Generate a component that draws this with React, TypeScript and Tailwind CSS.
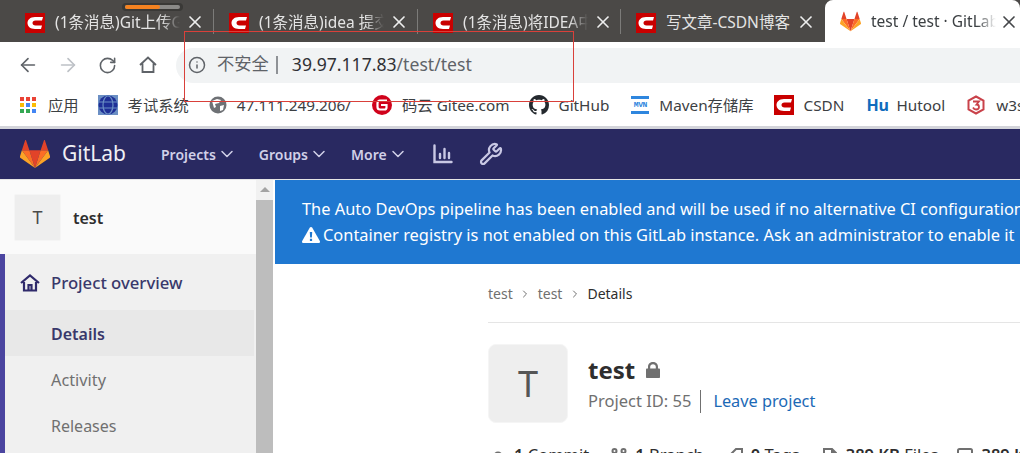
import { ArrowLeft, ArrowRight, ChevronDown, ChevronRight, Info, RotateCw, Wrench, X } from "lucide-react";

const font = { fontFamily: '"Noto Sans", "Noto Sans CJK SC", sans-serif' };

function Csdn({ size = 20 }: { size?: number }) {
  return (
    <svg width={size} height={size} viewBox="0 0 20 20" className="shrink-0">
      <rect width="20" height="20" fill="#c90000" />
      <path d="M18 4 H10 C5 4 2.5 7 2.5 10 C2.5 13 5 16 10 16 H16 L17 12.5 H10.5 C8.5 12.5 7.5 11.5 7.5 10 C7.5 8.5 8.5 7.5 10.5 7.5 H17 Z" fill="#fff" />
    </svg>
  );
}

function Tanuki({ size = 20 }: { size?: number }) {
  return (
    <svg width={size} height={size} viewBox="0 0 32 30" className="shrink-0">
      <path d="M16 30 L22 11 H10 Z" fill="#e24329" />
      <path d="M16 30 L10 11 H2 Z" fill="#fc6d26" />
      <path d="M2 11 L0 17.5 C-.2 18.2 0 18.8 .6 19.2 L16 30 Z" fill="#fca326" />
      <path d="M2 11 H10 L6.5 .6 C6.3 0 5.6 0 5.4 .6 Z" fill="#e24329" />
      <path d="M16 30 L22 11 H30 Z" fill="#fc6d26" />
      <path d="M30 11 L32 17.5 C32.2 18.2 32 18.8 31.4 19.2 L16 30 Z" fill="#fca326" />
      <path d="M30 11 H22 L25.5 .6 C25.7 0 26.4 0 26.6 .6 Z" fill="#e24329" />
    </svg>
  );
}

function Apps() {
  const colors = ["#ea4335", "#ea4335", "#ea4335", "#fbbc05", "#4285f4", "#fbbc05", "#34a853", "#34a853", "#4285f4"];
  return (
    <div className="grid grid-cols-3 gap-[2px] w-4 shrink-0">
      {colors.map((c, i) => (
        <div key={i} className="w-1 h-1" style={{ backgroundColor: c }} />
      ))}
    </div>
  );
}

function Globe() {
  return (
    <svg width="20" height="20" viewBox="0 0 20 20" className="shrink-0">
      <rect width="20" height="20" fill="#6b8fc4" />
      <circle cx="10" cy="10" r="9.5" fill="#1e2f96" />
      <ellipse cx="10" cy="10" rx="5" ry="9" fill="none" stroke="#6b8fc4" strokeWidth="1.2" />
      <path d="M1 7 H19 M1 13 H19" stroke="#6b8fc4" strokeWidth="1.2" />
    </svg>
  );
}

function GrayGlobe() {
  return (
    <svg width="18" height="18" viewBox="0 0 18 18" className="shrink-0">
      <circle cx="9" cy="9" r="8.5" fill="#6e7175" />
      <path d="M3 5 L8 3 L12 4 L10 7 L6 8 L7 11 L5 12 Z M11 10 L15 9 L14 14 L11 15 Z" fill="#fff" />
    </svg>
  );
}

function Gitee() {
  return (
    <svg width="20" height="20" viewBox="0 0 20 20" className="shrink-0">
      <circle cx="10" cy="10" r="10" fill="#d0021b" />
      <path d="M15 5.5 H8 A2.5 2.5 0 0 0 5.5 8 V12 A2.5 2.5 0 0 0 8 14.5 H12.5 A2 2 0 0 0 14.5 12.5 V10 H9" fill="none" stroke="#fff" strokeWidth="2.2" />
    </svg>
  );
}

function GitHubMark() {
  return (
    <svg width="20" height="20" viewBox="0 0 16 16" className="shrink-0" fill="#24292e">
      <path d="M8 0C3.58 0 0 3.58 0 8c0 3.54 2.29 6.53 5.47 7.59.4.07.55-.17.55-.38 0-.19-.01-.82-.01-1.49-2.01.37-2.53-.49-2.69-.94-.09-.23-.48-.94-.82-1.13-.28-.15-.68-.52-.01-.53.63-.01 1.08.58 1.23.82.72 1.21 1.87.87 2.33.66.07-.52.28-.87.51-1.07-1.78-.2-3.64-.89-3.64-3.95 0-.87.31-1.59.82-2.15-.08-.2-.36-1.02.08-2.12 0 0 .67-.21 2.2.82.64-.18 1.32-.27 2-.27s1.36.09 2 .27c1.53-1.04 2.2-.82 2.2-.82.44 1.1.16 1.92.08 2.12.51.56.82 1.27.82 2.15 0 3.07-1.87 3.75-3.65 3.95.29.25.54.73.54 1.48 0 1.07-.01 1.93-.01 2.2 0 .21.15.46.55.38A8.01 8.01 0 0 0 16 8c0-4.42-3.58-8-8-8z" />
    </svg>
  );
}

function Mvn() {
  return (
    <div className="w-[18px] h-[18px] shrink-0 flex flex-col justify-between items-center">
      <div className="h-[3px] w-full bg-[#2e86de]" />
      <span className="text-[8px] leading-[8px] font-bold text-[#2e86de] tracking-[-0.5px]" style={{ fontFamily: '"Liberation Mono", monospace' }}>MVN</span>
      <div className="h-[3px] w-full bg-[#2e86de]" />
    </div>
  );
}

function W3() {
  return (
    <svg width="20" height="20" viewBox="0 0 20 20" className="shrink-0">
      <path d="M10 1.5 L17.5 5.5 V14.5 L10 18.5 L2.5 14.5 V5.5 Z" fill="none" stroke="#c9424a" strokeWidth="2" />
      <path d="M7 6.5 H13 L10.5 9.5 C12.5 9.5 13 11 13 12 C13 13.5 11.5 14.5 10 14.5 C8.5 14.5 7.5 13.5 7 12.5" fill="none" stroke="#c9424a" strokeWidth="1.8" />
    </svg>
  );
}

function Tab({ title, last, width = "w-[204px]" }: { title: string; last?: boolean; width?: string }) {
  return (
    <div className={width + " h-[42px] shrink-0 flex items-center pl-[15px] pt-[3px] relative"}>
      <Csdn />
      <div
        className="ml-[10px] w-[125px] overflow-hidden whitespace-nowrap text-[15.5px] text-[#e4e4e4]"
        style={last ? undefined : { maskImage: "linear-gradient(to right, #000 85%, transparent)" }}
      >
        {title}
      </div>
      <X size={20} strokeWidth={2} className="ml-[5px] -mt-[1px] shrink-0 text-[#eeeeee]" />
      {!last && <div className="absolute right-0 top-[9px] w-px h-[25px] bg-[#7c7b79]" />}
    </div>
  );
}

function Bookmark({ icon, label, className }: { icon: React.ReactNode; label: string; className?: string }) {
  return (
    <div className={"flex items-center gap-[10px] whitespace-nowrap text-[15.3px] text-[#3c4043] " + (className ?? "")}>
      {icon}
      <span>{label}</span>
    </div>
  );
}

function NavItem({ label }: { label: string }) {
  return (
    <div className="flex items-center gap-[1px] text-[14px] font-semibold text-[#d1d0e8]">
      <span>{label}</span>
      <ChevronDown size={20} strokeWidth={1.8} />
    </div>
  );
}

function Stat({ icon, n, label, className }: { icon: React.ReactNode; n: string; label: string; className?: string }) {
  return (
    <div className={"flex items-start gap-[8px] whitespace-nowrap text-[16.5px] leading-[24px] text-[#2e2e2e] " + (className ?? "")}>
      <div className="w-4 h-4 shrink-0 mt-[5px]">{icon}</div>
      <span><b className="font-semibold">{n}</b> {label}</span>
    </div>
  );
}

const statIcon = { fill: "none", stroke: "#707070", strokeWidth: 2 };

export default function App() {
  return (
    <div className="w-[1020px] h-[453px] overflow-hidden bg-white relative flex flex-col" style={font}>
      {/* tab strip */}
      <div className="h-[42px] bg-[#4b4947] flex shrink-0 relative pl-[10px]">
        <Tab title="(1条消息)Git上传GitLab" />
        <Tab title="(1条消息)idea 提交代码" />
        <Tab title="(1条消息)将IDEA中的" width="w-[203px]" />
        <Tab title="写文章-CSDN博客" last />
        <div className="flex-1 bg-white rounded-t-[8px] flex items-center pl-[15px] pt-[1px]">
          <Tanuki size={21} />
          <div className="ml-[10px] w-[125px] overflow-hidden whitespace-nowrap text-[15.5px] text-[#3c4043]" style={{ maskImage: "linear-gradient(to right, #000 85%, transparent)" }}>
            test / test · GitLab
          </div>
          <X size={20} strokeWidth={2} className="ml-[3px] shrink-0 text-[#45474a]" />
        </div>
        {/* scroll indicator */}
        <div className="absolute left-[122px] top-[3px] w-[61px] h-[8px] rounded-full bg-[#3a3937] px-[3px] py-[2px]">
          <div className="h-full rounded-full bg-[#8b8a88]">
            <div className="h-full w-[35px] rounded-full bg-[#f58220]" />
          </div>
        </div>
      </div>

      {/* toolbar */}
      <div className="h-[42px] shrink-0 flex items-center pl-[17px] pt-[4px]">
        <ArrowLeft size={22} strokeWidth={1.8} className="text-[#5f6368]" />
        <ArrowRight size={22} strokeWidth={1.8} className="ml-[18px] text-[#bdc1c6]" />
        <RotateCw size={19} strokeWidth={2} className="ml-[19px] text-[#5f6368]" />
        <svg width="20" height="20" viewBox="0 0 20 20" className="ml-[21px] text-[#5f6368]" fill="none" stroke="currentColor" strokeWidth="1.8">
          <path d="M2 10 L10 2.5 L18 10 M4.5 8.5 V17 H15.5 V8.5" />
        </svg>
        <div className="ml-[18px] flex-1 h-[35px] bg-[#f1f3f4] rounded-l-full flex items-center pl-[12px]">
          <Info size={18} strokeWidth={2} className="text-[#5f6368]" />
          <span className="ml-[11px] pb-[2px] text-[17.3px] text-[#5f6368]">不安全</span>
          <div className="ml-[7px] w-[2px] h-[18px] bg-[#8f9296]" />
          <span className="ml-[14px] pb-[2px] text-[17.6px] text-[#5f6368]"><span className="text-[#303134]">39.97.117.83</span>/test/test</span>
        </div>
      </div>

      {/* bookmarks */}
      <div className="h-[42px] shrink-0 flex items-center relative">
        <Bookmark className="ml-[20px] gap-[12px]" icon={<Apps />} label="应用" />
        <Bookmark className="ml-[19px]" icon={<Globe />} label="考试系统" />
        <Bookmark className="ml-[20px]" icon={<GrayGlobe />} label="47.111.249.206/" />
        <Bookmark className="ml-[21px]" icon={<Gitee />} label="码云 Gitee.com" />
        <Bookmark className="ml-[19px]" icon={<GitHubMark />} label="GitHub" />
        <Bookmark className="ml-[22px] gap-[10px]" icon={<Mvn />} label="Maven存储库" />
        <Bookmark className="ml-[20px]" icon={<Csdn />} label="CSDN" />
        <Bookmark className="ml-[22px]" icon={<span className="w-5 text-[16px] font-bold text-[#0f6cbd]">Hu</span>} label="Hutool" />
        <Bookmark className="ml-[21px]" icon={<W3 />} label="w3school" />
      </div>
      <div className="h-[3px] shrink-0 bg-[#d3d4da]" />

      {/* gitlab nav */}
      <div className="h-[50px] shrink-0 bg-[#292961] flex items-center pl-[20px]">
        <Tanuki size={30} />
        <span className="ml-[12px] text-[21px] text-[#f0f0f5]">GitLab</span>
        <div className="ml-[35px] flex gap-[22px]">
          <NavItem label="Projects" />
          <NavItem label="Groups" />
          <NavItem label="More" />
        </div>
        <svg width="20" height="20" viewBox="0 0 20 20" className="ml-[25px] text-[#c9c8e4]" fill="none" stroke="currentColor" strokeWidth="2.4" strokeLinecap="round">
          <path d="M1.5 1.5 V18 H18.5 M7 10 V14 M11.5 5 V14 M16 9 V14" />
        </svg>
        <Wrench size={24} strokeWidth={2.2} className="ml-[26px] text-[#c9c8e4]" />
      </div>

      {/* body */}
      <div className="flex-1 flex min-h-0 border-t border-[#e5e5e5]">
        <div className="w-[256px] shrink-0 flex flex-col">
          <div className="h-[74px] shrink-0 bg-[#fafafa] flex items-center pl-[14px]">
            <div className="w-[47px] h-[47px] rounded-[2px] bg-[#eeeeee] border border-[#f5f5f5] flex items-center justify-center text-[18px] text-[#4a4a4a]">T</div>
            <span className="ml-[12px] pt-[1px] text-[16px] font-semibold text-[#2e2e2e]">test</span>
          </div>
          <div className="flex-1 bg-[#f0f0f0] border-l-[5px] border-[#4b45a0] pt-[4px]">
            <div className="h-[50px] mb-[2px] flex items-center pl-[15px]">
              <svg width="20" height="18" viewBox="0 0 20 18" fill="none" stroke="#2f2a6b" strokeWidth="2.2">
                <path d="M1 9 L10 1.5 L19 9 M4 8 V16.5 H16 V8 M8.5 16 V11 H11.5 V16" />
              </svg>
              <span className="ml-[11px] text-[16.7px] font-medium text-[#39386b]">Project overview</span>
            </div>
            <div className="h-[46px] w-[249px] pl-[46px] pt-[1px] bg-[#e8e8e8] flex items-center text-[16px] font-semibold text-[#39386b]">Details</div>
            <div className="h-[46px] pl-[46px] pt-[2px] flex items-center text-[16.3px] text-[#707070]">Activity</div>
            <div className="h-[46px] pl-[46px] pt-[1px] flex items-center text-[16px] text-[#707070]">Releases</div>
          </div>
        </div>
        {/* sidebar scrollbar */}
        <div className="w-[17px] shrink-0 bg-[#f1f1f1] flex flex-col items-center">
          <div className="h-[20px] pt-[7px]">
            <div className="w-0 h-0 border-x-[5px] border-x-transparent border-b-[5px] border-b-[#a3a3a3]" />
          </div>
          <div className="flex-1 w-full bg-[#bdbdbd]" />
        </div>
        <div className="w-[2px] shrink-0 bg-white" />

        {/* main */}
        <div className="flex-1 min-w-0 flex flex-col">
          <div className="h-[84px] shrink-0 bg-[#1f78d1] pl-[27px] pt-[16px] text-[16.4px] leading-[26px] text-white whitespace-nowrap overflow-hidden">
            <div>The Auto DevOps pipeline has been enabled and will be used if no alternative CI configuration file is found.</div>
            <div className="flex items-center gap-[3px]">
              <svg width="18" height="16" viewBox="0 0 18 16" className="shrink-0">
                <path d="M9 0 C9.6 0 10 .3 10.3 .8 L17.8 14 C18.3 15 17.7 16 16.6 16 H1.4 C.3 16 -.3 15 .2 14 L7.7 .8 C8 .3 8.4 0 9 0 Z" fill="#fff" />
                <path d="M7.8 5 H10.2 L9.9 10.5 H8.1 Z M7.9 11.8 H10.1 V14 H7.9 Z" fill="#1f78d1" />
              </svg>
              <span>Container registry is not enabled on this GitLab instance. Ask an administrator to enable it</span>
            </div>
          </div>
          <div className="pl-[213px] flex-1 flex flex-col">
            <div className="h-[59px] shrink-0 flex items-center border-b border-[#e5e5e5] text-[14px] text-[#707070] pt-[1px]">
              <span>test</span>
              <ChevronRight size={12} className="mx-[6.5px]" />
              <span>test</span>
              <ChevronRight size={12} className="mx-[6.5px]" />
              <span className="text-[#2e2e2e]">Details</span>
            </div>
            <div className="flex mt-[21px]">
              <div className="w-[80px] h-[79px] rounded-[8px] bg-[#eeeeee] border border-[#f5f5f5] flex items-center justify-center text-[36px] text-[#555555]">T</div>
              <div className="ml-[20px] pt-[9px]">
                <div className="flex items-center gap-[11px] text-[24px] leading-[34px] font-bold text-[#2e2e2e]">
                  <span>test</span>
                  <svg width="14" height="16" viewBox="0 0 14 16" fill="#707070">
                    <path d="M2 6.5 V4.8 C2 2 4.2 0 7 0 S12 2 12 4.8 V6.5 H13 C13.6 6.5 14 7 14 7.5 V15 C14 15.6 13.6 16 13 16 H1 C.4 16 0 15.6 0 15 V7.5 C0 7 .4 6.5 1 6.5 Z M4.2 6.5 H9.8 V4.8 C9.8 3.2 8.6 2.2 7 2.2 S4.2 3.2 4.2 4.8 Z" />
                  </svg>
                </div>
                <div className="flex items-center text-[16.5px] leading-[26px] mt-[1px]">
                  <span className="text-[#707070]">Project ID: 55</span>
                  <div className="w-px h-[23px] bg-[#707070] ml-[9px] mr-[12px]" />
                  <span className="text-[16.3px] text-[#1b69b6]">Leave project</span>
                </div>
              </div>
            </div>
            <div className="flex mt-[20px] shrink-0 pl-[2px]">
              <Stat
                icon={<svg width="16" height="16" viewBox="0 0 16 16" {...statIcon}><circle cx="8" cy="8" r="3.5" /><path d="M0 8 H4.5 M11.5 8 H16" /></svg>}
                n="1"
                label="Commit"
              />
              <Stat
                className="ml-[22px]"
                icon={<svg width="16" height="16" viewBox="0 0 16 16" {...statIcon}><circle cx="3.5" cy="3" r="2" /><circle cx="12.5" cy="3" r="2" /><circle cx="3.5" cy="13" r="2" /><path d="M3.5 5 V11 M12.5 5 C12.5 9 3.5 7 3.5 11" /></svg>}
                n="1"
                label="Branch"
              />
              <Stat
                className="ml-[23px]"
                icon={<svg width="16" height="16" viewBox="0 0 16 16" {...statIcon}><path d="M9 1 H15 V7 L7 15 L1 9 Z" /></svg>}
                n="0"
                label="Tags"
              />
              <Stat
                className="ml-[22px]"
                icon={<svg width="16" height="16" viewBox="0 0 16 16" {...statIcon}><path d="M2 1 H10 L14 5 V15 H2 Z M10 1 V5 H14" /></svg>}
                n="389 KB"
                label="Files"
              />
              <Stat
                className="ml-[19px]"
                icon={<svg width="16" height="16" viewBox="0 0 16 16" {...statIcon}><rect x="1" y="1" width="14" height="14" rx="1.5" /><path d="M1 11 H15" /></svg>}
                n="389 KB"
                label="Storage"
              />
            </div>
          </div>
        </div>
      </div>

      {/* red annotation box drawn on the screenshot */}
      <div className="absolute left-[184px] top-[31px] w-[390px] h-[71px] border border-[#d9403a]" />
    </div>
  );
}
